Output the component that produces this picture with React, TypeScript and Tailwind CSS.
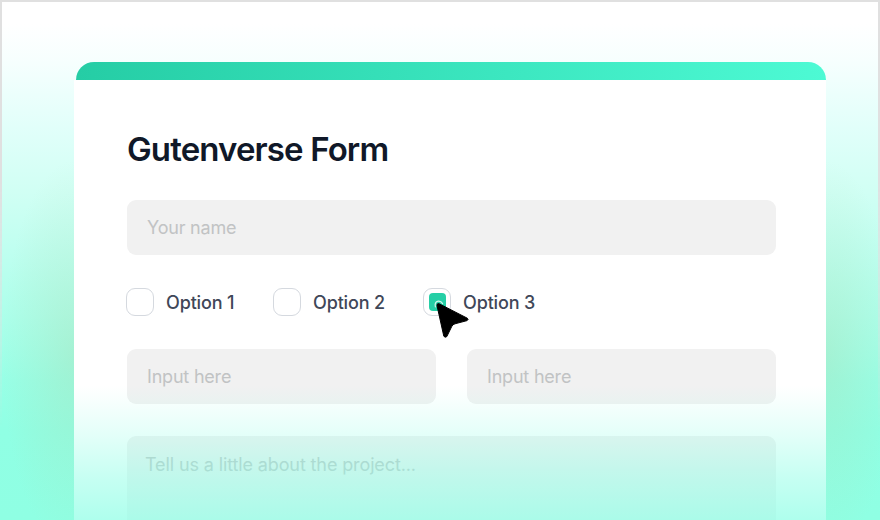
import React from "react";

function Field({ label, className = "" }: { label: string; className?: string }) {
  return (
    <div
      className={`flex h-[55px] items-center rounded-[9px] bg-[#f1f1f1] pl-5 text-[18px] tracking-[-0.2px] text-[#c1c3c4] ${className}`}
    >
      {label}
    </div>
  );
}

function Option({ label, checked = false, className = "" }: { label: string; checked?: boolean; className?: string }) {
  return (
    <div className={`flex items-center gap-3 ${className}`}>
      <span className="relative flex size-7 items-center justify-center rounded-[9px] border-[1.3px] border-[#d5d9df] bg-white">
        {checked && <span className="h-[18px] w-[17px] rounded-[4px] bg-[#25cfa6]" />}
        {checked && <Cursor />}
      </span>
      <span className="text-[18px] font-medium tracking-[-0.15px] text-[#3f4758]">{label}</span>
    </div>
  );
}

function Cursor() {
  return (
    <svg className="absolute left-[7px] top-[8px] z-10" width="40" height="44" viewBox="0 0 40 44">
      <path d="M4.4 9.8 Q3.2 5 7.2 4.2 Q10 3.8 11.6 6.6" fill="none" stroke="#d5f5ec" strokeWidth="1.2" strokeLinecap="round" />
      <path
        d="M8 6.7 L36.3 21.2 Q37.9 22.6 36.1 23.6 L24 26.8 Q21.6 27.4 20.7 29.6 L15.8 39.6 Q14 41 12.8 39.2 L6 8.6 Q5.8 6.2 8 6.7 Z"
        fill="#000"
        stroke="#000"
        strokeWidth="1"
        strokeLinejoin="round"
      />
    </svg>
  );
}

export default function App() {
  return (
    <main className="relative h-[520px] w-[880px] overflow-hidden bg-[linear-gradient(to_bottom,#ffffff_24px,#f6fffe_62px,#e1fffa_128px,#d1fff4_190px,#bffff0_250px,#abffea_320px,#98ffe6_380px,#90ffe4_430px,#8fffe3_520px)] px-[74px] pt-[62px] font-['Inter',sans-serif]">
      <div className="absolute -left-1 top-[160px] h-[460px] w-[888px] bg-[radial-gradient(ellipse_72px_195px_at_78px_195px,rgba(172,216,172,0.34),rgba(172,220,178,0.18)_50%,transparent),radial-gradient(ellipse_72px_195px_at_830px_195px,rgba(172,216,172,0.34),rgba(172,220,178,0.18)_50%,transparent)]" />
      <div className="pointer-events-none absolute inset-0 border-x-2 border-t-2 border-[#e0e0e0] [mask-image:linear-gradient(to_bottom,#000_0px,#000_180px,rgba(0,0,0,0.5)_300px,transparent_430px)]" />

      <section className="relative h-[458px] w-[752px]">
        <header className="ml-[2px] h-[18px] rounded-t-[18px] bg-[linear-gradient(to_right,#25cda5,#4dfad4)]" />
        <div className="h-[440px] bg-white pl-[53px] pr-[50px] pt-[49px]">
          <h1 className="h-10 text-[33px] font-semibold leading-10 tracking-[-0.87px] text-[#101828]">Gutenverse Form</h1>
          <Field label="Your name" className="mt-[31px]" />
          <div className="-ml-px mt-[33px] flex h-7">
            <Option label="Option 1" className="w-[147px]" />
            <Option label="Option 2" className="w-[150px]" />
            <Option label="Option 3" checked />
          </div>
          <div className="mt-[33px] grid grid-cols-2 gap-[31px]">
            <Field label="Input here" />
            <Field label="Input here" />
          </div>
          <div className="mt-8 h-[100px] rounded-t-[9px] bg-[#f1f1f1] pl-[18px] pt-[15px] text-[18px] leading-[27px] tracking-[-0.12px] text-[#c1c3c4]">
            Tell us a little about the project...
          </div>
        </div>
        <div className="pointer-events-none absolute inset-x-0 bottom-0 h-[134px] bg-[linear-gradient(to_bottom,rgba(143,255,230,0)_0%,rgba(143,255,230,0.1)_16%,rgba(143,255,230,0.25)_37%,rgba(143,255,230,0.5)_68%,rgba(143,255,230,0.72)_100%)]" />
      </section>
    </main>
  );
}
